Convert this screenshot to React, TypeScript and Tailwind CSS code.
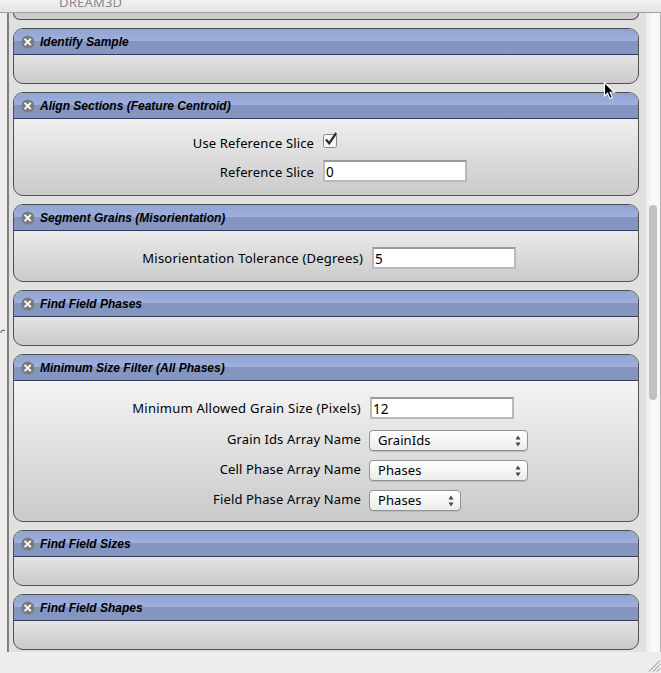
import React from "react";

const LABEL = "text-right whitespace-nowrap shrink-0";

function CloseIcon() {
  return (
    <svg width="14" height="14" viewBox="0 0 14 14" className="shrink-0">
      <circle cx="6.8" cy="7" r="6.6" fill="#7b7b7b" />
      <path d="M3.6 3.9 9.8 10.1M9.8 3.9 3.6 10.1" stroke="#fff" strokeWidth="1.9" />
    </svg>
  );
}

function Panel({ title, height, children }: { title: string; height: string; children?: React.ReactNode }) {
  return (
    <section className={`${height} w-[626px] shrink-0 overflow-hidden rounded-[10px] border border-[#505050] bg-linear-to-b from-[#fcfcfc] to-[#cacaca]`}>
      <header className="flex h-[26px] items-center gap-[5px] border-b border-[#343b5c] bg-[linear-gradient(180deg,#91a3d1_0px,#9fb0df_12px,#8395bd_12px,#8597c1_25px)] pl-[7px] pt-px">
        <CloseIcon />
        <h2 className="font-['Liberation_Sans',Arial,sans-serif] text-[12px] leading-[14px] font-bold italic whitespace-nowrap">{title}</h2>
      </header>
      {children}
    </section>
  );
}

function Field({ value }: { value: string }) {
  return (
    <div className="h-[22px] w-[144px] shrink-0 border-2 border-[#b9b9b9] border-t-[#9a9a9a] bg-white pl-px text-[13.5px] leading-[21px]">{value}</div>
  );
}

function Select({ value, width }: { value: string; width: string }) {
  return (
    <div className={`${width} flex h-[21px] shrink-0 items-center justify-between rounded-[4px] border border-[#929292] bg-linear-to-b from-white to-[#ececec] pl-2 pr-[6px] shadow-[0_1px_0_#bcbcbc]`}>
      <span className="leading-[19px] tracking-[0.1px]">{value}</span>
      <svg width="6" height="12" viewBox="0 0 6 12">
        <path d="M3 .5 5.5 4.5H.5zM3 11.5 5.5 7.5H.5z" fill="#444" />
      </svg>
    </div>
  );
}

export default function App() {
  return (
    <div className="relative flex h-[673px] w-[661px] flex-col overflow-hidden bg-[#ededed] font-['Noto_Sans','Open_Sans',sans-serif] text-[13px] leading-[18px] text-black">
      <div className="h-[13px] shrink-0 border-b border-[#a0a0a0] bg-linear-to-b from-[#f2f2f2] to-[#e4e4e4] pl-[59px] text-[#888888]">
        <div className="-mt-[7px] text-[13px] leading-[18px] tracking-[0.2px]">DREAM3D</div>
      </div>
      <div className="flex h-[639px] shrink-0">
        <div className="flex w-[7px] items-start bg-[#ededed] pt-[316px]">
          <svg width="6" height="5" viewBox="0 0 6 5"><path d="M1 4C1 1 3 .5 5 2" fill="none" stroke="#777" strokeWidth="1.3" /></svg>
        </div>
        <div className="w-[2px] bg-[#808080]" />
        <main className="flex w-[637px] flex-col gap-2 overflow-hidden bg-[#e0e0e0] pl-1">
          <div className="h-[7px] w-[626px] shrink-0 rounded-b-[10px] border border-t-0 border-[#505050] bg-[#cccccc]" />
          <Panel title="Identify Sample" height="h-[56px]" />
          <Panel title="Align Sections (Feature Centroid)" height="h-[104px]">
            <div className="flex flex-col pt-[13px]">
              <div className="flex h-[20px] items-start">
                <span className={`${LABEL} w-[300px] pt-[2px] tracking-[0.14px]`}>Use Reference Slice</span>
                <svg width="17" height="18" viewBox="0 0 17 18" className="ml-2">
                  <rect x="1.5" y="2.5" width="13" height="13" rx="2" fill="#f8f8f8" stroke="#888" />
                  <path d="M4 7.5 7.2 11.3 14.2 1" fill="none" stroke="#303030" strokeWidth="2.3" />
                </svg>
              </div>
              <div className="mt-[8px] flex">
                <span className={`${LABEL} mr-[9px] w-[300px] pt-[3px] tracking-[0.14px]`}>Reference Slice</span>
                <Field value="0" />
              </div>
            </div>
          </Panel>
          <Panel title="Segment Grains (Misorientation)" height="h-[78px]">
            <div className="flex pt-[16px]">
              <span className={`${LABEL} mr-[9px] w-[349px] pt-[2px] tracking-[0.21px]`}>Misorientation Tolerance (Degrees)</span>
              <Field value="5" />
            </div>
          </Panel>
          <Panel title="Find Field Phases" height="h-[56px]" />
          <Panel title="Minimum Size Filter (All Phases)" height="h-[168px]">
            <div className="flex flex-col pt-[16px]">
              <div className="flex h-[33px]">
                <span className={`${LABEL} mr-[9px] w-[347px] pt-[2px] tracking-[0.24px]`}>Minimum Allowed Grain Size (Pixels)</span>
                <Field value="12" />
              </div>
              <div className="flex h-[30px]">
                <span className={`${LABEL} mr-[8px] w-[347px] tracking-[0.13px]`}>Grain Ids Array Name</span>
                <Select value="GrainIds" width="w-[159px]" />
              </div>
              <div className="flex h-[30px]">
                <span className={`${LABEL} mr-[8px] w-[347px] tracking-[0.13px]`}>Cell Phase Array Name</span>
                <Select value="Phases" width="w-[159px]" />
              </div>
              <div className="flex h-[30px]">
                <span className={`${LABEL} mr-[8px] w-[347px] tracking-[0.13px]`}>Field Phase Array Name</span>
                <Select value="Phases" width="w-[92px]" />
              </div>
            </div>
          </Panel>
          <Panel title="Find Field Sizes" height="h-[56px]" />
          <Panel title="Find Field Shapes" height="h-[56px]" />
        </main>
        <aside className="w-[14px] bg-linear-to-r from-[#ededed] via-[#fafafa] to-[#f6f6f6] pl-[3px] pt-[192px]">
          <div className="h-[195px] w-[8px] rounded-full bg-[#c1c1c1]" />
        </aside>
        <div className="w-px bg-[#b4b4b4]" />
      </div>
      <footer className="flex h-[21px] items-end justify-end pb-px">
        <svg width="13" height="12" viewBox="0 0 13 12"><path d="M1 11.5 12 .5M5 11.5 12 4.5M9 11.5 12 8.5" stroke="#858585" /></svg>
      </footer>
      <svg width="13" height="20" viewBox="0 0 13 20" className="absolute left-[603px] top-[81px]">
        <path d="M1.5 1.5V15L4.6 12.2 7 17.6 9.4 16.5 7 11.3H11.3Z" fill="#000" stroke="#fff" strokeWidth="1.1" />
      </svg>
    </div>
  );
}
